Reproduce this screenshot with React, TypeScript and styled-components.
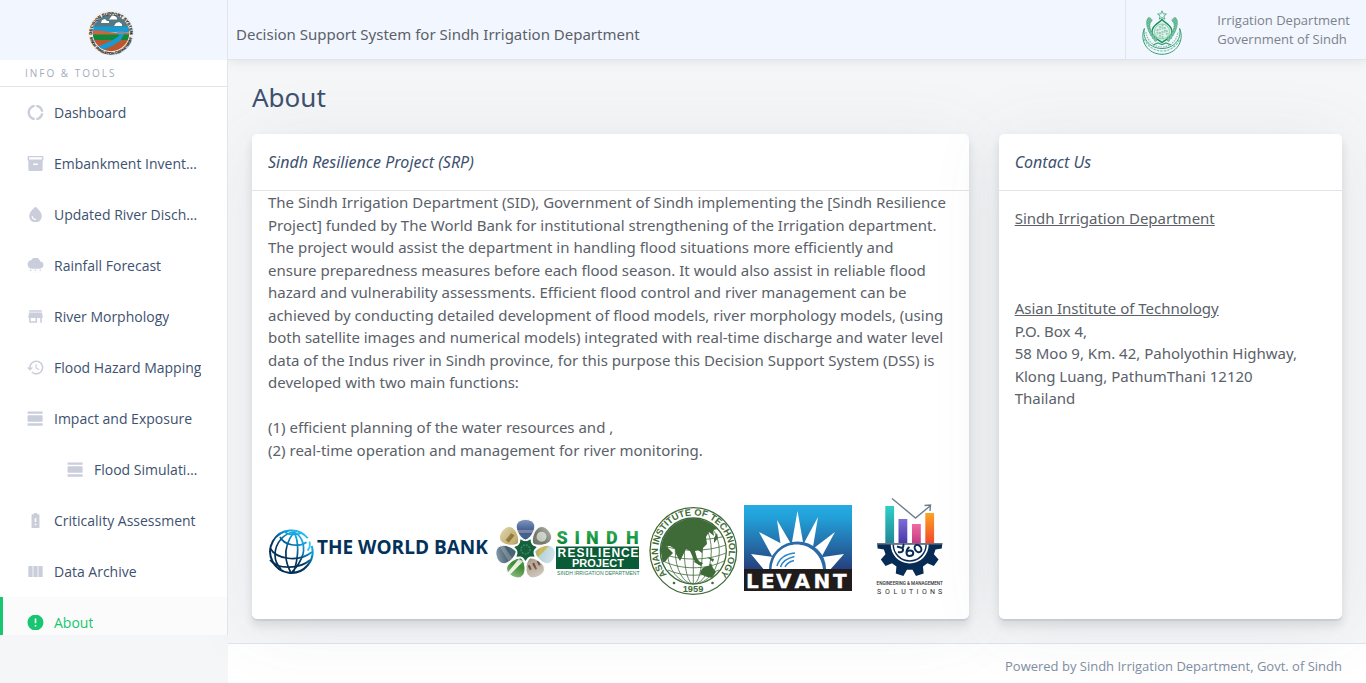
import React from "react";
import styled, { createGlobalStyle } from "styled-components";
import type { IconType } from "react-icons";
import {
  MdBatteryAlert,
  MdCloudySnowing,
  MdDonutLarge,
  MdError,
  MdHistory,
  MdInventory2,
  MdStore,
  MdViewColumn,
  MdViewDay,
  MdWaterDrop,
} from "react-icons/md";

const colors = {
  heading: "#3d5170",
  body: "#5a6169",
  muted: "#818ea3",
  line: "#e1e5eb",
  bar: "#f2f6ff",
  page: "#f5f6f8",
  accent: "#17c671",
  icon: "#cacedb",
};

const openSans = '"Open Sans", "Liberation Sans", sans-serif';

const GlobalStyle = createGlobalStyle`
  *, *::before, *::after { box-sizing: border-box; }
  body {
    margin: 0;
    background: ${colors.page};
    color: ${colors.body};
    font: 400 15px/1.5 "Noto Sans", "Liberation Sans", sans-serif;
  }
`;

const Page = styled.div`
  display: flex;
  align-items: flex-start;
  min-height: 100vh;
`;

const Sidebar = styled.aside`
  flex: 0 0 228px;
  height: calc(100vh - 48px);
  overflow: hidden;
  background: #fff;
  border-right: 1px solid ${colors.line};
  font-family: ${openSans};
  position: relative;
  z-index: 3;
`;

const Brand = styled.a`
  display: flex;
  align-items: center;
  justify-content: center;
  height: 60px;
  padding: 6px 6px 0 0;
  background: ${colors.bar};
`;

const NavTitle = styled.h6`
  margin: 0;
  padding: 0 25px;
  border-bottom: 1px solid ${colors.line};
  color: #a3abbb;
  font-size: 10px;
  font-weight: 400;
  line-height: 26px;
  letter-spacing: 2px;
  text-transform: uppercase;
`;

const NavList = styled.ul`
  margin: 0;
  padding: 0;
  list-style: none;
`;

const NavLink = styled.a<{ $active?: boolean; $nested?: boolean }>`
  display: flex;
  align-items: center;
  gap: 9px;
  height: 51px;
  padding: 0 25px 0 ${(p) => (p.$nested ? 66 : 26)}px;
  color: ${(p) => (p.$active ? colors.accent : colors.heading)};
  background: ${(p) => (p.$active ? "#fbfbfb" : "transparent")};
  box-shadow: ${(p) => (p.$active ? `inset 3px 0 0 ${colors.accent}` : "none")};
  font-size: 14px;
  text-decoration: none;
`;

const NavIcon = styled.span<{ $active?: boolean }>`
  display: flex;
  flex: none;
  align-items: center;
  width: 19px;
  height: 15px;
  overflow: hidden;
  color: ${(p) => (p.$active ? colors.accent : colors.icon)};
  svg { flex: none; }
`;

const NavText = styled.span`
  overflow: hidden;
  text-overflow: ellipsis;
  white-space: nowrap;
`;

const Content = styled.div`
  flex: 1;
  min-width: 0;
  min-height: 100vh;
  display: flex;
  flex-direction: column;
`;

const TopBar = styled.header`
  position: relative;
  z-index: 2;
  display: flex;
  justify-content: space-between;
  height: 60px;
  padding-left: 8px;
  background: ${colors.bar};
  border-bottom: 1px solid ${colors.line};
  box-shadow: 0 2px 10px rgba(90, 97, 105, 0.12);
`;

const SystemName = styled.div`
  padding-top: 23px;
`;

const Owner = styled.div`
  display: flex;
  gap: 35px;
  padding: 10px 16px 0;
  border-left: 1px solid ${colors.line};
`;

const OwnerName = styled.div`
  padding-top: 1px;
  color: #7c828c;
  font-family: ${openSans};
  font-size: 13px;
  line-height: 19px;
  white-space: nowrap;
`;

const Main = styled.main`
  flex: 1;
  padding: 20px 24px 24px;
`;

const Title = styled.h3`
  margin: 0 0 20px;
  color: ${colors.heading};
  font-size: 26px;
  font-weight: 400;
  line-height: 34px;
`;

const Row = styled.div`
  display: flex;
  margin: 0 -15px;
`;

const Column = styled.div<{ $span: number }>`
  display: flex;
  flex: 0 0 calc(100% * ${(p) => p.$span} / 12);
  min-width: 0;
  padding: 0 15px;
`;

const Card = styled.section`
  position: relative;
  flex: 1;
  min-width: 0;
  background: #fff;
  border-radius: 5px;
  box-shadow:
    0 2px 0 rgba(90, 97, 105, 0.11),
    0 4px 8px rgba(90, 97, 105, 0.12),
    0 10px 10px rgba(90, 97, 105, 0.06),
    0 7px 70px rgba(90, 97, 105, 0.1);
`;

const CardTitle = styled.h6`
  margin: 0;
  padding: 0 16px;
  border-bottom: 1px solid ${colors.line};
  color: ${colors.heading};
  font-size: 16px;
  font-style: italic;
  font-weight: 400;
  line-height: 56px;
`;

const CardBody = styled.div<{ $top?: number }>`
  padding: ${(p) => p.$top ?? 0}px 16px 24px;
`;

const Paragraph = styled.p`
  margin: 0;
`;

const Logos = styled.div`
  display: flex;
  margin-top: 32px;
  svg { flex: 0 1 auto; min-width: 0; }
`;

const Footer = styled.footer`
  padding: 13px 24px 7px;
  background: #fff;
  border-top: 1px solid ${colors.line};
  color: ${colors.muted};
  font-family: ${openSans};
  font-size: 13px;
  line-height: 19px;
  text-align: right;
`;

interface NavEntry {
  label: string;
  icon: IconType;
  nested?: boolean;
  active?: boolean;
}

const entries: NavEntry[] = [
  { label: "Dashboard", icon: MdDonutLarge },
  { label: "Embankment Inventory", icon: MdInventory2 },
  { label: "Updated River Discharge", icon: MdWaterDrop },
  { label: "Rainfall Forecast", icon: MdCloudySnowing },
  { label: "River Morphology", icon: MdStore },
  { label: "Flood Hazard Mapping", icon: MdHistory },
  { label: "Impact and Exposure", icon: MdViewDay },
  { label: "Flood Simulations", icon: MdViewDay, nested: true },
  { label: "Criticality Assessment", icon: MdBatteryAlert },
  { label: "Data Archive", icon: MdViewColumn },
  { label: "About", icon: MdError, active: true },
];

const sans = '"Liberation Sans", sans-serif';

function SystemLogo() {
  return (
    <svg width="46" height="46" viewBox="0 0 46 46" role="img" aria-label="Decision Support System">
      <defs>
        <clipPath id="sys-disc"><circle cx="23" cy="23" r="18.2" /></clipPath>
        <path id="sys-top" d="M4.100 24a18.900 18.900 0 1 1 37.800 0" />
        <path id="sys-low" d="M1.300 23a21.700 21.700 0 0 0 43.400 0" />
      </defs>
      <circle cx="23" cy="23" r="22.700" fill="#f1eee7" />
      <g clipPath="url(#sys-disc)">
        <path fill="#547982" d="M0 0h46v17H0z" />
        <path fill="#169bd5" d="M0 16.500h46v6H0z" />
        <path fill="#c9673c" d="M0 20l13 .5 14 2.500h19v3H0z" />
        <path fill="#169bd5" d="M20 17h26v5l-15 1z" />
        <path fill="#0f8a3c" d="M0 24.500h46v6H0z" />
        <path fill="#bd552d" d="M0 30h46v16H0z" />
        <path fill="#169bd5" d="M30 21h7l-2 5-3 5-8 5-12 5-6-3 10-4 9-4 6-4z" />
        <path fill="#7f8f96" d="M29 21.500h7v2.500h-7z" />
        <path fill="#fff" d="M13 13h8v-2h-2l-2-2-3 1zM21 9.500h8V8l-2-2-3-.5zM26 16h8v-2l-3-2-3 1z" />
      </g>
      <g fill="#1c1c1c" stroke="#1c1c1c" strokeWidth=".15" fontFamily={sans} fontWeight="700">
        <text fontSize="4.2"><textPath href="#sys-top" startOffset="50%" textAnchor="middle">DECISION SUPPORT SYSTEM</textPath></text>
        <text fontSize="3.6"><textPath href="#sys-low" startOffset="50%" textAnchor="middle">SINDH IRRIGATION DEPARTMENT</textPath></text>
      </g>
    </svg>
  );
}

function SindhEmblem() {
  const leaves = Array.from({ length: 9 }, (_, i) => i);
  return (
    <svg width="40" height="45" viewBox="0 0 40 45" role="img" aria-label="Government of Sindh">
      <g fill="none" stroke="#35a172">
        <path d="M20 .8l1.200 3 3.200.2-2.500 2 .9 3.200-2.800-1.800-2.800 1.800.9-3.200-2.500-2 3.200-.2z" strokeWidth=".8" />
        <path d="M2.400 18.500C-3 31 6 44.300 20 44.300S43 31 37.600 18.500C40 30 31 38.500 20 38.500S0 30 2.400 18.500z" strokeWidth="1" />
        <path d="M2 29c4 7.500 10 12 18 12s14-4.500 18-12" strokeWidth="1.200" strokeDasharray="2.500 1" opacity=".6" />
        <path d="M4 22c1 9 8 15 16 15s15-6 16-15" strokeWidth="1.200" strokeDasharray="1.500 1" opacity=".6" />
        <path d="M20 9.500c3 4 10 5 10 12.500 0 6-6 7-10 10.500-4-3.500-10-4.500-10-10.500C10 14.500 17 13.500 20 9.500z" strokeWidth="1.400" stroke="#15905a" fill="#dff0eb" />
        <circle cx="20" cy="21.500" r="7.500" strokeWidth=".8" opacity=".6" />
        <path d="M15.500 19v6M18 16v4M18 22v6M20.500 14.500v5M20.500 21v4M22.800 17v6M24.800 20v5M20.500 26v3" strokeWidth="1.800" strokeDasharray="2 .8" opacity=".45" />
        <path d="M11 35l5-2 4 1.500 4-1.500 5 2" strokeWidth="1.200" />
      </g>
      <g fill="#7cc3a2" stroke="#3da577" strokeWidth=".5">
        {leaves.map((i) => {
          const a = ((150 + i * 11.5) * Math.PI) / 180;
          const x = 13.8 * Math.cos(a);
          const y = 22.5 - 14.5 * Math.sin(a - Math.PI / 5.2);
          return (
            <g key={i}>
              <ellipse cx={20 + x} cy={y} rx="1.300" ry="2.500" transform={`rotate(${-50 + i * 6} ${20 + x} ${y})`} />
              <ellipse cx={20 - x} cy={y} rx="1.300" ry="2.500" transform={`rotate(${50 - i * 6} ${20 - x} ${y})`} />
            </g>
          );
        })}
      </g>
    </svg>
  );
}

function WorldBankLogo() {
  return (
    <svg width="224" height="102" viewBox="268 493 224 102" role="img" aria-label="The World Bank">
      <defs>
        <linearGradient id="wb" x1="275" y1="572" x2="307" y2="532" gradientUnits="userSpaceOnUse">
          <stop offset="0" stopColor="#022a4e" />
          <stop offset=".45" stopColor="#04355f" />
          <stop offset=".75" stopColor="#0a9bd8" />
          <stop offset=".95" stopColor="#2cc1f2" />
        </linearGradient>
      </defs>
      <g fill="none" stroke="url(#wb)" strokeWidth="1.700">
        <path strokeWidth="2" d="M308 538.500A21.200 21.200 0 1 0 311.800 546" />
        <path d="M294 532c-9 1-19 10-19 23 0 7 3 11 6 14M294 532c-6 8-9 16-8 25 0 6 3 12 5 16M294 532c5 9 5 25-.5 40.500M294 532c8 4 11 13 9 22-2 7-7 14-11 18" />
        <path d="M280 537c4 8 18 11 27 5M270 548c6 11 28 15 42 4M270 560c8 10 30 9 40 0M285 532c3 3 12 3 17 1" />
      </g>
      <path d="M305 539l4-1 2.500 5-3 3z" fill="#fff" />
      <path d="M309.500 541.500c1 4 0 7-2 9" fill="none" stroke="#39c3f3" strokeWidth="1.800" />
      <text x="317" y="553.500" fill="#03315a" fontFamily={openSans} fontWeight="700" fontSize="19">THE WORLD BANK</text>
    </svg>
  );
}

const petals: [string, string, string][] = [
  ["#35568f", "#7d7f9c", "M-9 1h18v3H-9z"],
  ["#6e7468", "#c5c9bd", "M-5 0a5 5 0 1 0 10 0 5 5 0 1 0-10 0"],
  ["#b9d5dc", "#c9b85c", "M-9-2L9 9H-9z"],
  ["#b5a796", "#6d4b3b", "M-7 0h2v5h-2zM-2-2h2v7h-2zM3 0h2v5H3z"],
  ["#3d8b30", "#e9f2de", "M-3 9l6-18 3 1-4 17z"],
  ["#3c5c70", "#71808a", "M-9 2l18-6v4L-9 7z"],
  ["#c4b270", "#8a6f38", "M-5-1H4v4h-9z"],
];

const petalShape = "M0 11C-5 9.500-9.500 2-9.300-3-8.500-8-4-9.500 0-9.500S8.500-8 9.300-3C9.500 2 5 9.500 0 11z";

function ResilienceLogo() {
  return (
    <svg width="152" height="102" viewBox="492 493 152 102" role="img" aria-label="Sindh Resilience Project">
      <defs>
        <clipPath id="petal"><path d={petalShape} /></clipPath>
        <linearGradient id="srp" x1="0" y1="531" x2="0" y2="545" gradientUnits="userSpaceOnUse">
          <stop offset="0" stopColor="#2fae52" />
          <stop offset="1" stopColor="#078236" />
        </linearGradient>
        <linearGradient id="petal-shade" x1="0" y1="0" x2="0" y2="1">
          <stop offset="0" stopColor="#fff" stopOpacity=".4" />
          <stop offset=".6" stopColor="#fff" stopOpacity="0" />
          <stop offset="1" stopColor="#102a18" stopOpacity=".35" />
        </linearGradient>
      </defs>
      {petals.map(([base, detail, d], i) => (
        <g key={i} transform={`rotate(${(i * 360) / 7} 525.5 549.5) translate(525.5 529)`}>
          <g clipPath="url(#petal)">
            <path fill={base} d="M-10-10h20v22h-20z" />
            <path fill={detail} d={d} />
            <path fill="url(#petal-shade)" d="M-10-10h20v22h-20z" />
          </g>
          <path d={petalShape} fill="none" stroke="#fff" strokeWidth="1" />
        </g>
      ))}
      <circle cx="525.500" cy="549.500" r="8.500" fill="#14613c" />
      <g fill="#14613c">
        {petals.map((_, i) => (
          <path key={i} d="M522 543l3.500-5 3.500 5z" transform={`rotate(${((i + 0.5) * 360) / 7} 525.5 549.5)`} />
        ))}
      </g>
      <circle cx="525.500" cy="549.500" r="4.500" fill="none" stroke="#3d8563" strokeWidth="1.500" strokeDasharray="2 1" />
      <text x="556.500 574.500 586 606 626" y="544" fontFamily='"Roboto", sans-serif' fontWeight="900" fontSize="18" fill="url(#srp)">SINDH</text>
      <path fill="#0a5c36" d="M556 546.500h83v22.500h-83z" />
      <g fill="#fff" fontFamily={sans} fontWeight="700">
        <text fontSize="12" x="557.500 567.500 576.500 585.500 589.500 598 602.500 611.500 621 630.500" y="556.700">RESILIENCE</text>
        <text fontSize="11" x="598" y="567.200" textAnchor="middle">PROJECT</text>
      </g>
      <text x="557" y="574.500" fontFamily={sans} fontSize="5.100" fill="#2e7d57">SINDH IRRIGATION DEPARTMENT</text>
    </svg>
  );
}

function AitLogo() {
  const green = "#3f6b38";
  return (
    <svg width="96" height="102" viewBox="644 493 96 102" role="img" aria-label="Asian Institute of Technology">
      <defs>
        <path id="ait-ring" d="M672.500 579.500A35.500 35.500 0 1 1 714.500 579.500" />
        <clipPath id="ait-globe"><circle cx="693.300" cy="551" r="32.500" /></clipPath>
      </defs>
      <circle cx="693.300" cy="551" r="43.300" fill="#fff" stroke={green} strokeWidth="1.300" />
      <circle cx="693.300" cy="551" r="33" fill="#fff" stroke={green} strokeWidth="1.300" />
      <g clipPath="url(#ait-globe)">
        <g fill="none" stroke={green} strokeWidth=".8">
          <path d="M693.300 518v66M661 545c18 7 46 7 65 0M661 553c18 8 46 8 65 0M663 561c18 9 43 9 61 0M668 570c15 7 36 7 51 0M661 536c18 5 46 5 65 0M664 528h59" />
          <ellipse cx="693.300" cy="551" rx="9" ry="33" />
          <ellipse cx="693.300" cy="551" rx="18" ry="33" />
          <ellipse cx="693.300" cy="551" rx="26" ry="33" />
        </g>
        <path fill={green} d="M664 530c6-10 20-14 34-12 10 2 17 6 20 11l-5 1 1 6-5-4-3 5 1 7-4 4-1 5-4-3-3 1 2 7 4 6-2 1-5-5-4-9-4-2-6 12-4-7-1-5-5-3-4 0 3 3 4 4-7 7-5-9-4-8z" />
        <path fill={green} d="M661 551c4-4 7-3 9 0l-4 10-4 2zM700 574c1-6 5-8 9-8l2-3 2 5 3 4-4 6-5-1zM695 560l8 3-2 3-7-4zM707 557l7 2-1 3zM714 538l3-5 1 5-4 5z" />
      </g>
      <g fontFamily={sans} fontWeight="700" fontSize="9.300" fill={green}>
        <text><textPath href="#ait-ring" startOffset="50%" textAnchor="middle">ASIAN INSTITUTE OF TECHNOLOGY</textPath></text>
        <text x="693" y="592" textAnchor="middle">1959</text>
      </g>
      <circle cx="674" cy="583" r="1.300" fill={green} />
      <circle cx="712.500" cy="583" r="1.300" fill={green} />
    </svg>
  );
}

function LevantLogo() {
  const rays = [
    "751,554 781,558 773,571 765,571",
    "759,532 784,545 772,556",
    "777,520 791,544 781,547",
    "797.5,511 803,542 792,542",
    "818,517 813,547 804,543",
    "835,532 822,556 814,548",
    "844,554 829,571 822,571 816,558",
  ];
  return (
    <svg width="120" height="102" viewBox="740 493 120 102" role="img" aria-label="Levant">
      <defs>
        <linearGradient id="lev-sky" x1="0" y1="0" x2="0" y2="1">
          <stop offset="0" stopColor="#25ace3" />
          <stop offset=".2" stopColor="#22a0d8" />
          <stop offset="1" stopColor="#26407e" />
        </linearGradient>
      </defs>
      <path fill="url(#lev-sky)" d="M744 505h108v64H744z" />
      {rays.map((points) => <polygon key={points} points={points} fill="#fff" />)}
      <path fill="#2a6aa6" d="M769 569a28.500 27.500 0 0 1 57 0z" />
      <path fill="#fff" d="M771.500 569c2-32 47-33 51.500 0z" />
      <g fill="none" stroke="#2d86c8" strokeWidth="1.600">
        <path d="M777 566c2-7 8-12 18-13M780.500 567c2-6 7-9 14-10.500M785 567c1.500-3 5-5.500 9-6.500" />
      </g>
      <path fill="#1f1c1b" d="M744 569h108v22H744z" />
      <text x="746 761 776 794.500 813.500 833" y="587.500" fill="#fff" stroke="#fff" strokeWidth=".3" fontFamily='"DejaVu Sans", sans-serif' fontWeight="700" fontSize="20">LEVANT</text>
    </svg>
  );
}

function gearPath() {
  const cx = 909.7;
  const cy = 543.5;
  const at = (r: number, deg: number) => {
    const a = (deg * Math.PI) / 180;
    return `${(cx + r * Math.cos(a)).toFixed(2)} ${(cy + r * Math.sin(a)).toFixed(2)}`;
  };
  let d = `M${at(32.5, 0)}L${at(32.5, 9)}L${at(26.5, 13)}`;
  [36, 72, 108, 144].forEach((t) => {
    d += `L${at(26.5, t - 12)}L${at(33, t - 7)}L${at(33, t + 7)}L${at(26.5, t + 12)}`;
  });
  return `${d}L${at(26.5, 167)}L${at(32.5, 171)}L${at(32.5, 180)}z`;
}

function Solutions360Logo() {
  const bars = [
    { x: 885.3, y: 506, from: "#2fd0c4", to: "#21869a" },
    { x: 898.5, y: 519, from: "#7d6fd6", to: "#4937a8" },
    { x: 912, y: 524, from: "#f26ba0", to: "#c23b86" },
    { x: 925.3, y: 513, from: "#fba324", to: "#f4482b" },
  ];
  return (
    <svg width="92" height="102" viewBox="860 493 92 102" role="img" aria-label="360 Engineering and Management Solutions">
      <defs>
        {bars.map((b, i) => (
          <linearGradient key={i} id={`bar-${i}`} x1="0" y1="0" x2="0" y2="1">
            <stop offset="0" stopColor={b.from} />
            <stop offset="1" stopColor={b.to} />
          </linearGradient>
        ))}
      </defs>
      {bars.map((b, i) => (
        <rect key={i} x={b.x} y={b.y} width="8.800" height={543 - b.y} fill={`url(#bar-${i})`} />
      ))}
      <path d="M892 498.500l23.500 19.500 14.500-12M924.500 505.500l6-.5-.5 6" fill="none" stroke="#6c7f8c" strokeWidth="1.400" />
      <path d={gearPath()} fill="#062c55" />
      <path d="M890.700 544.500a19 19 0 0 0 38 0z" fill="#fff" />
      <path d="M892.500 544.500a17.200 17.200 0 0 0 34.400 0h-1.500a15.700 15.700 0 0 1-31.400 0z" fill="#062c55" />
      <path d="M877 543h65.500v1.500H877z" fill="#6c7480" />
      <g fill="none" stroke="#062c55" strokeWidth="2">
        <path d="M897 546.500l5 1.500c1.500-1 2-3 1-4M898 552c4 1 6-1 4.500-4" />
        <path d="M909.500 547c-3.500 2-4.500 9 0 9 5 0 5-6 0-5.500-2 0-3 1.500-3 3" />
        <ellipse cx="918" cy="548.500" rx="3" ry="4" transform="rotate(-35 918 548.5)" />
      </g>
      <g fill="#2b2b2e" fontFamily='"Roboto", sans-serif' textAnchor="middle">
        <text x="909.700" y="585" fontSize="4.600" fontWeight="500">ENGINEERING &amp; MANAGEMENT</text>
        <text x="879 887.500 895.500 903.500 911 917.500 924.500 932.500 940" y="594" fontSize="7">SOLUTIONS</text>
      </g>
    </svg>
  );
}

export default function App() {
  return (
    <Page>
      <GlobalStyle />
      <Sidebar>
        <Brand href="#"><SystemLogo /></Brand>
        <NavTitle>Info &amp; Tools</NavTitle>
        <nav>
          <NavList>
            {entries.map(({ label, icon: Icon, nested, active }) => (
              <li key={label}>
                <NavLink href="#" $nested={nested} $active={active}>
                  <NavIcon $active={active}><Icon size={19} /></NavIcon>
                  <NavText>{label}</NavText>
                </NavLink>
              </li>
            ))}
          </NavList>
        </nav>
      </Sidebar>
      <Content>
        <TopBar>
          <SystemName>Decision Support System for Sindh Irrigation Department</SystemName>
          <Owner>
            <SindhEmblem />
            <OwnerName>
              Irrigation Department
              <br />
              Government of Sindh
            </OwnerName>
          </Owner>
        </TopBar>
        <Main>
          <Title>About</Title>
          <Row>
            <Column $span={8}>
              <Card>
                <CardTitle>Sindh Resilience Project (SRP)</CardTitle>
                <CardBody>
                  <Paragraph>
                    The Sindh Irrigation Department (SID), Government of Sindh implementing the [Sindh
                    Resilience Project] funded by The World Bank for institutional strengthening of the
                    Irrigation department. The project would assist the department in handling flood
                    situations more efficiently and ensure&nbsp;preparedness measures before each flood
                    season. It would also assist in reliable flood hazard and vulnerability assessments.
                    Efficient flood control and river management can be achieved by conducting detailed
                    development of flood models, river morphology models, (using both satellite images
                    and numerical models) integrated with real-time discharge and water level data of
                    the Indus river in Sindh province, for this purpose this Decision Support System
                    (DSS) is developed with two main functions:
                    <br />
                    <br />
                    (1) efficient planning of the water resources and ,
                    <br />
                    (2) real-time operation and management for river monitoring.
                  </Paragraph>
                  <Logos>
                    <WorldBankLogo />
                    <ResilienceLogo />
                    <AitLogo />
                    <LevantLogo />
                    <Solutions360Logo />
                  </Logos>
                </CardBody>
              </Card>
            </Column>
            <Column $span={4}>
              <Card>
                <CardTitle>Contact Us</CardTitle>
                <CardBody $top={16}>
                  <Paragraph>
                    <u>Sindh Irrigation Department</u>
                    <br />
                    <br />
                    <br />
                    <br />
                    <u>Asian Institute of Technology</u>
                    <br />
                    P.O. Box 4,
                    <br />
                    58 Moo 9, Km. 42, Paholyothin Highway,
                    <br />
                    Klong Luang, PathumThani 12120
                    <br />
                    Thailand
                  </Paragraph>
                </CardBody>
              </Card>
            </Column>
          </Row>
        </Main>
        <Footer>Powered by Sindh Irrigation Department, Govt. of Sindh</Footer>
      </Content>
    </Page>
  );
}
